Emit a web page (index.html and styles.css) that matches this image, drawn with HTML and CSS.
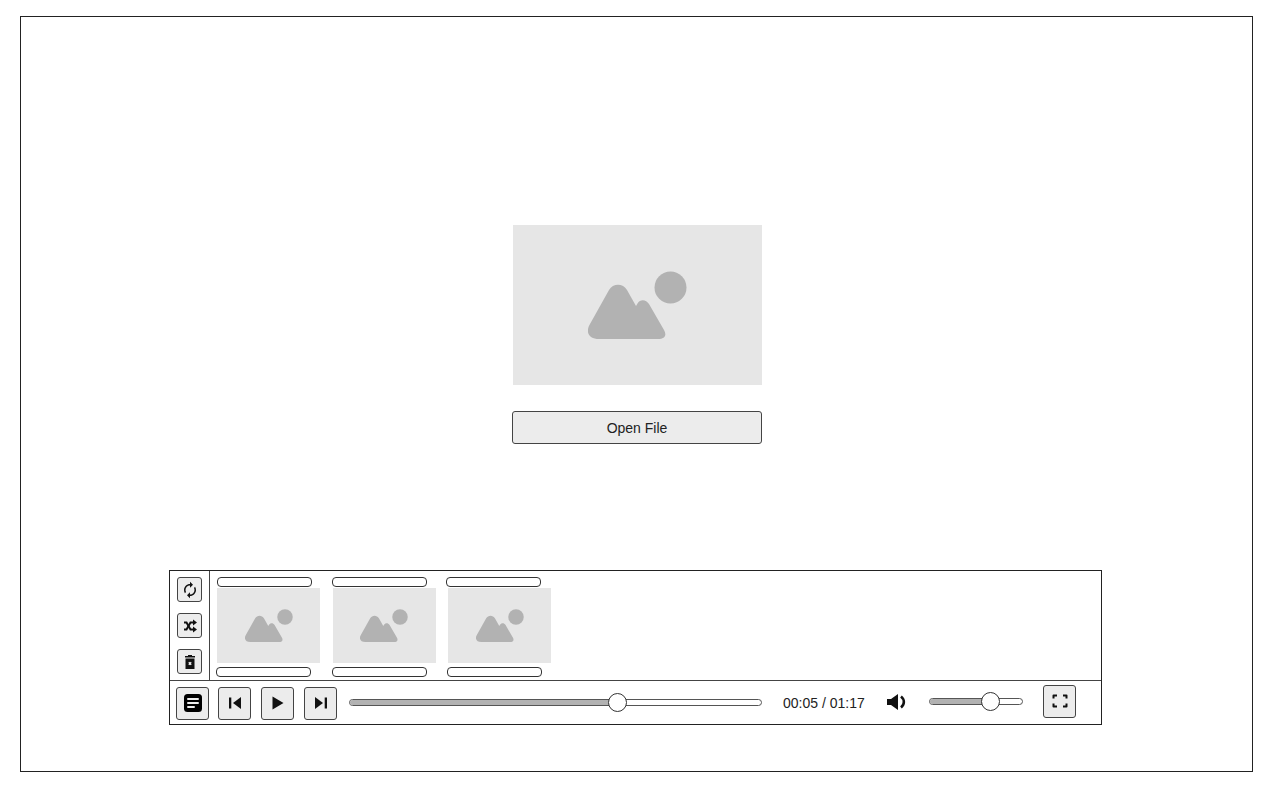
FILE: index.html
```html
<!DOCTYPE html>
<html lang="en">
<head>
    <meta charset="UTF-8">
    <meta name="viewport" content="width=device-width, initial-scale=1.0">
    <title>Media Player</title>
    <link rel="stylesheet" href="styles.css">
</head>
<body>
    <svg class="sprite" aria-hidden="true">
        <symbol id="picture" viewBox="75 46 99 68">
            <path d="M86 114C76 114 72 107 77 99L96 65C100 58 110 58 114 65L123 81L124.500 78.500C127 74 133 74 136 79L151 105C154 110 152 114 145 114Z"/>
            <circle cx="157.500" cy="62.500" r="16"/>
        </symbol>
    </svg>

    <div class="window">
        <main class="stage">
            <div class="placeholder placeholder-large">
                <svg class="picture-large"><use href="#picture"/></svg>
            </div>
            <button class="open-button" type="button">Open File</button>
        </main>

        <section class="player">
            <div class="playlist">
                <div class="playlist-tools">
                    <button class="btn btn-small" type="button" aria-label="Repeat">
                        <svg width="18" height="18" viewBox="0 0 24 24" fill="#111">
                            <path transform="matrix(-1 0 0 1 24 0)" d="M12 4V1L8 5l4 4V6c3.310 0 6 2.690 6 6 0 1.010-.25 1.970-.7 2.800l1.460 1.460C19.540 15.030 20 13.570 20 12c0-4.420-3.580-8-8-8zm0 14c-3.310 0-6-2.690-6-6 0-1.010.25-1.970.7-2.800L5.240 7.740C4.460 8.970 4 10.430 4 12c0 4.420 3.580 8 8 8v3l4-4-4-4v3z"/>
                        </svg>
                    </button>
                    <button class="btn btn-small" type="button" aria-label="Shuffle">
                        <svg width="16" height="16" viewBox="0 0 16 16" fill="none" stroke="#111" stroke-width="2">
                            <path d="M2 4.500H4.500L8.500 11.500H12"/>
                            <path d="M2 11.500H4.500L8.500 4.500H12"/>
                            <path d="M11 1.500L15 4.500L11 7.500Z" fill="#111" stroke="none"/>
                            <path d="M11 8.500L15 11.500L11 14.500Z" fill="#111" stroke="none"/>
                        </svg>
                    </button>
                    <button class="btn btn-small" type="button" aria-label="Clear playlist">
                        <svg width="16" height="16" viewBox="0 0 16 16">
                            <path d="M3 2H6V1H10V2H13V3.500H3Z" fill="#111"/>
                            <path d="M3.500 4.500H12.500V15H3.500Z" fill="#111"/>
                            <path d="M6.800 8.300L9.200 10.700M9.200 8.300L6.800 10.700" stroke="#eee" stroke-width="1.400"/>
                        </svg>
                    </button>
                </div>
                <div class="playlist-items">
                    <div class="playlist-item">
                        <div class="pill"></div>
                        <div class="placeholder placeholder-thumb">
                            <svg class="picture-thumb"><use href="#picture"/></svg>
                        </div>
                        <div class="pill pill-nudge"></div>
                    </div>
                    <div class="playlist-item">
                        <div class="pill pill-nudge"></div>
                        <div class="placeholder placeholder-thumb">
                            <svg class="picture-thumb"><use href="#picture"/></svg>
                        </div>
                        <div class="pill pill-nudge"></div>
                    </div>
                    <div class="playlist-item">
                        <div class="pill pill-nudge-more"></div>
                        <div class="placeholder placeholder-thumb">
                            <svg class="picture-thumb"><use href="#picture"/></svg>
                        </div>
                        <div class="pill pill-nudge"></div>
                    </div>
                </div>
            </div>

            <div class="controls">
                <button class="btn btn-large" type="button" aria-label="Playlist">
                    <svg width="20" height="20" viewBox="0 0 20 20">
                        <rect x="1" y="1" width="18" height="18" rx="3.500" fill="#000"/>
                        <path d="M5 6H15M5 10H15M5 14H11" stroke="#eee" stroke-width="2" stroke-linecap="round"/>
                    </svg>
                </button>
                <div class="transport">
                    <button class="btn btn-large" type="button" aria-label="Previous">
                        <svg width="16" height="16" viewBox="0 0 16 16" fill="#111">
                            <rect x="2" y="2.500" width="2.300" height="11"/>
                            <path d="M14 2V14L6 8Z"/>
                        </svg>
                    </button>
                    <button class="btn btn-large" type="button" aria-label="Play">
                        <svg width="16" height="16" viewBox="0 0 16 16" fill="#111">
                            <path d="M2.500 1.500V14.500L13.500 8Z"/>
                        </svg>
                    </button>
                    <button class="btn btn-large" type="button" aria-label="Next">
                        <svg width="16" height="16" viewBox="0 0 16 16" fill="#111">
                            <path d="M2 2V14L10 8Z"/>
                            <rect x="11.700" y="2.500" width="2.300" height="11"/>
                        </svg>
                    </button>
                </div>
                <div class="slider slider-progress">
                    <div class="slider-fill" style="width: 65%"></div>
                    <div class="slider-thumb" style="left: 65%"></div>
                </div>
                <span class="time">00:05 / 01:17</span>
                <svg class="volume-icon" width="21" height="18" viewBox="0 0 21 18">
                    <path d="M1 6H5L12 1V17L5 12H1Z" fill="#111"/>
                    <path d="M15 3.500C18.800 6.500 18.800 11.500 15 14.500" fill="none" stroke="#111" stroke-width="2.600"/>
                </svg>
                <div class="slider slider-volume">
                    <div class="slider-fill" style="width: 65%"></div>
                    <div class="slider-thumb" style="left: 65%"></div>
                </div>
                <button class="btn btn-large btn-fullscreen" type="button" aria-label="Fullscreen">
                    <svg width="16" height="16" viewBox="0 0 16 16" fill="none" stroke="#111" stroke-width="2" stroke-linejoin="round">
                        <path d="M1.500 5.500V2.500H5M11 2.500H14.500V5.500M14.500 10.500V13.500H11M5 13.500H1.500V10.500"/>
                    </svg>
                </button>
            </div>
        </section>
    </div>
</body>
</html>
```

FILE: styles.css
```css
body {
    font-family: "Liberation Sans", Arial, sans-serif;
    background-color: #fff;
    color: #222;
    margin: 0;
    padding: 16px 0 0 20px;
}

.sprite {
    display: none;
}

.window {
    box-sizing: border-box;
    display: flex;
    flex-direction: column;
    width: 1233px;
    height: 756px;
    padding-bottom: 46px;
    border: 1px solid #222;
}

/* Centre area */
.stage {
    flex: 1;
    display: flex;
    flex-direction: column;
    align-items: center;
    padding: 208px 0 0 1px;
}

.placeholder {
    display: flex;
    align-items: center;
    justify-content: center;
    background-color: #e6e6e6;
}

.placeholder svg {
    fill: #b2b2b2;
}

.placeholder-large {
    width: 249px;
    height: 160px;
}

.picture-large {
    width: 99px;
    height: 68px;
}

.open-button {
    box-sizing: border-box;
    width: 250px;
    height: 33px;
    margin-top: 26px;
    background-color: #ececec;
    border: 1px solid #444;
    border-radius: 3px;
    font-family: inherit;
    font-size: 14px;
    color: #222;
}

/* Player */
.player {
    box-sizing: border-box;
    width: 933px;
    height: 155px;
    margin-left: 148px;
    border: 1px solid #222;
}

.playlist {
    display: flex;
    height: 109px;
    border-bottom: 1px solid #444;
}

.playlist-tools {
    box-sizing: border-box;
    display: flex;
    flex-direction: column;
    justify-content: space-between;
    align-items: center;
    width: 40px;
    padding: 6px 0;
    border-right: 1px solid #444;
}

.playlist-items {
    display: flex;
    padding: 6px 0 0 7px;
}

.playlist-item {
    display: flex;
    flex-direction: column;
    width: 115.500px;
}

.pill {
    box-sizing: border-box;
    width: 95px;
    height: 10px;
    border: 1px solid #333;
    border-radius: 4px;
}

/* The labels don't line up exactly with their thumbnails */
.pill-nudge {
    margin-left: -1px;
}

.pill-nudge-more {
    margin-left: -2px;
}

.placeholder-thumb {
    width: 103px;
    height: 75px;
    margin: 1px 0 4px;
}

.picture-thumb {
    width: 48px;
    height: 33px;
}

.controls {
    display: flex;
    align-items: center;
    height: 44px;
    padding-left: 6px;
}

.btn {
    box-sizing: border-box;
    display: flex;
    align-items: center;
    justify-content: center;
    flex-shrink: 0;
    padding: 0;
    background-color: #ececec;
    border: 1px solid #444;
    border-radius: 3px;
}

.btn-small {
    width: 25px;
    height: 25px;
}

.btn-large {
    width: 33px;
    height: 33px;
}

.transport {
    display: flex;
    gap: 10px;
    margin-left: 9px;
}

/* Sliders */
.slider {
    box-sizing: border-box;
    position: relative;
    height: 7px;
    margin-bottom: 2px;
    border: 1px solid #555;
    border-radius: 4px;
}

.slider-fill {
    height: 100%;
    background-color: #b2b2b2;
    border-radius: 3px 0 0 3px;
}

.slider-thumb {
    box-sizing: border-box;
    position: absolute;
    top: -7px;
    width: 19px;
    height: 19px;
    margin-left: -9px;
    background-color: #fff;
    border: 1px solid #333;
    border-radius: 50%;
}

.slider-progress {
    width: 413px;
    margin-left: 12px;
}

.time {
    width: 81px;
    margin-left: 21px;
    font-size: 14px;
    white-space: nowrap;
}

.volume-icon {
    margin: 0 0 2px 22px;
}

.slider-volume {
    width: 94px;
    margin-left: 22px;
    margin-bottom: 4px;
}

.btn-fullscreen {
    margin-left: 20px;
    margin-bottom: 4px;
}
```
